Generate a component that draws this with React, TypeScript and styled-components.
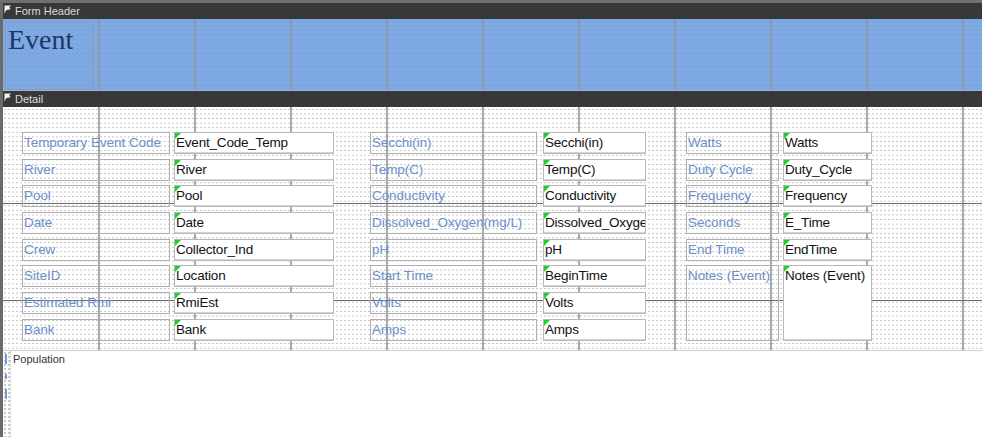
import { Fragment } from 'react';
import styled, { createGlobalStyle } from 'styled-components';

interface IField {
    label: string,
    control: string,
    span?: number,
}

const col1: IField[] = [
    { label: 'Temporary Event Code', control: 'Event_Code_Temp' },
    { label: 'River', control: 'River' },
    { label: 'Pool', control: 'Pool' },
    { label: 'Date', control: 'Date' },
    { label: 'Crew', control: 'Collector_Ind' },
    { label: 'SiteID', control: 'Location' },
    { label: 'Estimated Rmi', control: 'RmiEst' },
    { label: 'Bank', control: 'Bank' },
];

const col2: IField[] = [
    { label: 'Secchi(in)', control: 'Secchi(in)' },
    { label: 'Temp(C)', control: 'Temp(C)' },
    { label: 'Conductivity', control: 'Conductivity' },
    { label: 'Dissolved_Oxygen(mg/L)', control: 'Dissolved_Oxyge' },
    { label: 'pH', control: 'pH' },
    { label: 'Start Time', control: 'BeginTime' },
    { label: 'Volts', control: 'Volts' },
    { label: 'Amps', control: 'Amps' },
];

const col3: IField[] = [
    { label: 'Watts', control: 'Watts' },
    { label: 'Duty Cycle', control: 'Duty_Cycle' },
    { label: 'Frequency', control: 'Frequency' },
    { label: 'Seconds', control: 'E_Time' },
    { label: 'End Time', control: 'EndTime' },
    { label: 'Notes (Event)', control: 'Notes (Event)', span: 3 },
];

const groups = [
    { fields: col1, cols: '148px 160px', gap: 4, offset: 0 },
    { fields: col2, cols: '167px 103px', gap: 6, offset: 36 },
    { fields: col3, cols: '93px 89px', gap: 4, offset: 40 },
];

function BarIcon() {
    return (
        <svg width="8" height="9" viewBox="0 0 8 9">
            <path d="M0.5 0.5 H7 L5.2 2.6 L6.6 4.2 L2.4 5 L0.5 8.5 Z" fill="#f2f2f2" />
        </svg>
    );
}

function App() {
    return (
        <Page>
            <GlobalStyle />
            <SectionBar><BarIcon />Form Header</SectionBar>
            <HeaderSurface>
                <TitleLabel>Event</TitleLabel>
            </HeaderSurface>
            <SectionBar><BarIcon />Detail</SectionBar>
            <DetailSurface>
                {groups.map((g, i) => (
                    <FieldGroup key={i} $cols={g.cols} $gap={g.gap} $offset={g.offset}>
                        {g.fields.map(f => (
                            <Fragment key={f.label}>
                                <Label $span={f.span || 1}>{f.label}</Label>
                                <TextBox $span={f.span || 1}>{f.control}</TextBox>
                            </Fragment>
                        ))}
                    </FieldGroup>
                ))}
            </DetailSurface>
            <Subform>
                <Ruler>
                    <Tick /><Tick $short /><Tick />
                </Ruler>
                <SubLabel>Population</SubLabel>
            </Subform>
        </Page>
    );
}

const GlobalStyle = createGlobalStyle`
    * { box-sizing: border-box; }
    body {
        margin: 0;
        background: #ffffff;
        font-family: "Liberation Sans", Arial, sans-serif;
    }
`;

const Page = styled.div`
    width: 982px;
    height: 437px;
    overflow: hidden;
    display: flex;
    flex-direction: column;
    border-top: 3px solid #6f6f6f;
    border-left: 3px solid #6a6a6a;
`;

const SectionBar = styled.div`
    height: 16px;
    flex: none;
    background: #383838;
    color: #dcdcdc;
    font-size: 11px;
    display: flex;
    align-items: center;
    gap: 3px;
    padding-left: 1px;
    svg {
        margin-top: -3px;
    }
`;

const HeaderSurface = styled.div`
    height: 72px;
    flex: none;
    padding: 3px 0 0 2px;
    border-bottom: 1px solid #9fb4d4;
    background-color: #7ea9e3;
    background-image:
        repeating-linear-gradient(to right, transparent 0 94px, #8f97a8 94px 96px),
        radial-gradient(circle, #74a0da 0.8px, transparent 1px);
    background-size: auto, 4px 4.6px;
    background-position: 1px 0, 0 0;
`;

const TitleLabel = styled.div`
    width: 88px;
    height: 68px;
    border: 1px solid #8c9ab2;
    font-family: "Liberation Serif", "DejaVu Serif", serif;
    font-size: 28px;
    color: #1d3763;
    padding: 0 0 0 2px;
    line-height: 34px;
`;

const DetailSurface = styled.div`
    height: 243px;
    flex: none;
    display: flex;
    align-items: flex-start;
    padding: 25px 0 0 19px;
    background-color: #ffffff;
    background-image:
        repeating-linear-gradient(to bottom, transparent 0 96px, #6a6a6a 96px 97px),
        repeating-linear-gradient(to right, transparent 0 94px, #a9a9a9 94px 96px),
        radial-gradient(circle, #c2c2c2 0.7px, transparent 0.9px);
    background-size: auto, auto, 4px 4.6px;
    background-position: 0 0, 1px 0, 0 0;
`;

const FieldGroup = styled.div<{ $cols: string, $gap: number, $offset: number }>`
    display: grid;
    grid-template-columns: ${p => p.$cols};
    grid-template-rows: repeat(8, 22px);
    column-gap: ${p => p.$gap}px;
    row-gap: 4.7px;
    margin-left: ${p => p.$offset}px;
`;

const Label = styled.div<{ $span: number }>`
    grid-row: span ${p => p.$span};
    border: 1px solid #aeaeae;
    color: #6c8fca;
    font-size: 13.4px;
    padding: 2px 0 0 1px;
    white-space: nowrap;
    overflow: hidden;
`;

const TextBox = styled.div<{ $span: number }>`
    grid-row: span ${p => p.$span};
    position: relative;
    background: #ffffff;
    border: 1px solid #b9b9b9;
    box-shadow: inset 0 -1px 0 #d4d4d4;
    color: #111111;
    font-size: 13.5px;
    letter-spacing: -0.2px;
    padding: 2px 0 0 1px;
    white-space: nowrap;
    overflow: hidden;
    &::before {
        content: '';
        position: absolute;
        left: 0;
        top: 0;
        border-top: 6px solid #1fcf2a;
        border-right: 6px solid transparent;
    }
`;

const Subform = styled.div`
    flex: 1;
    display: flex;
    border-top: 1px solid #cfcfcf;
    background: #ffffff;
`;

const Ruler = styled.div`
    width: 8px;
    display: flex;
    flex-direction: column;
    gap: 10px;
    padding: 3px 0 0 2px;
    border-right: 1px dotted #c4c4c4;
    background-image: radial-gradient(circle, #c6c6c6 0.7px, transparent 0.9px);
    background-size: 4px 4px;
`;

const Tick = styled.div<{ $short?: boolean }>`
    width: 2px;
    height: ${p => p.$short ? 5 : 10}px;
    background: #6f9ad6;
`;

const SubLabel = styled.div`
    font-size: 11px;
    color: #333333;
    padding: 2px 0 0 2px;
`;

export default App;
